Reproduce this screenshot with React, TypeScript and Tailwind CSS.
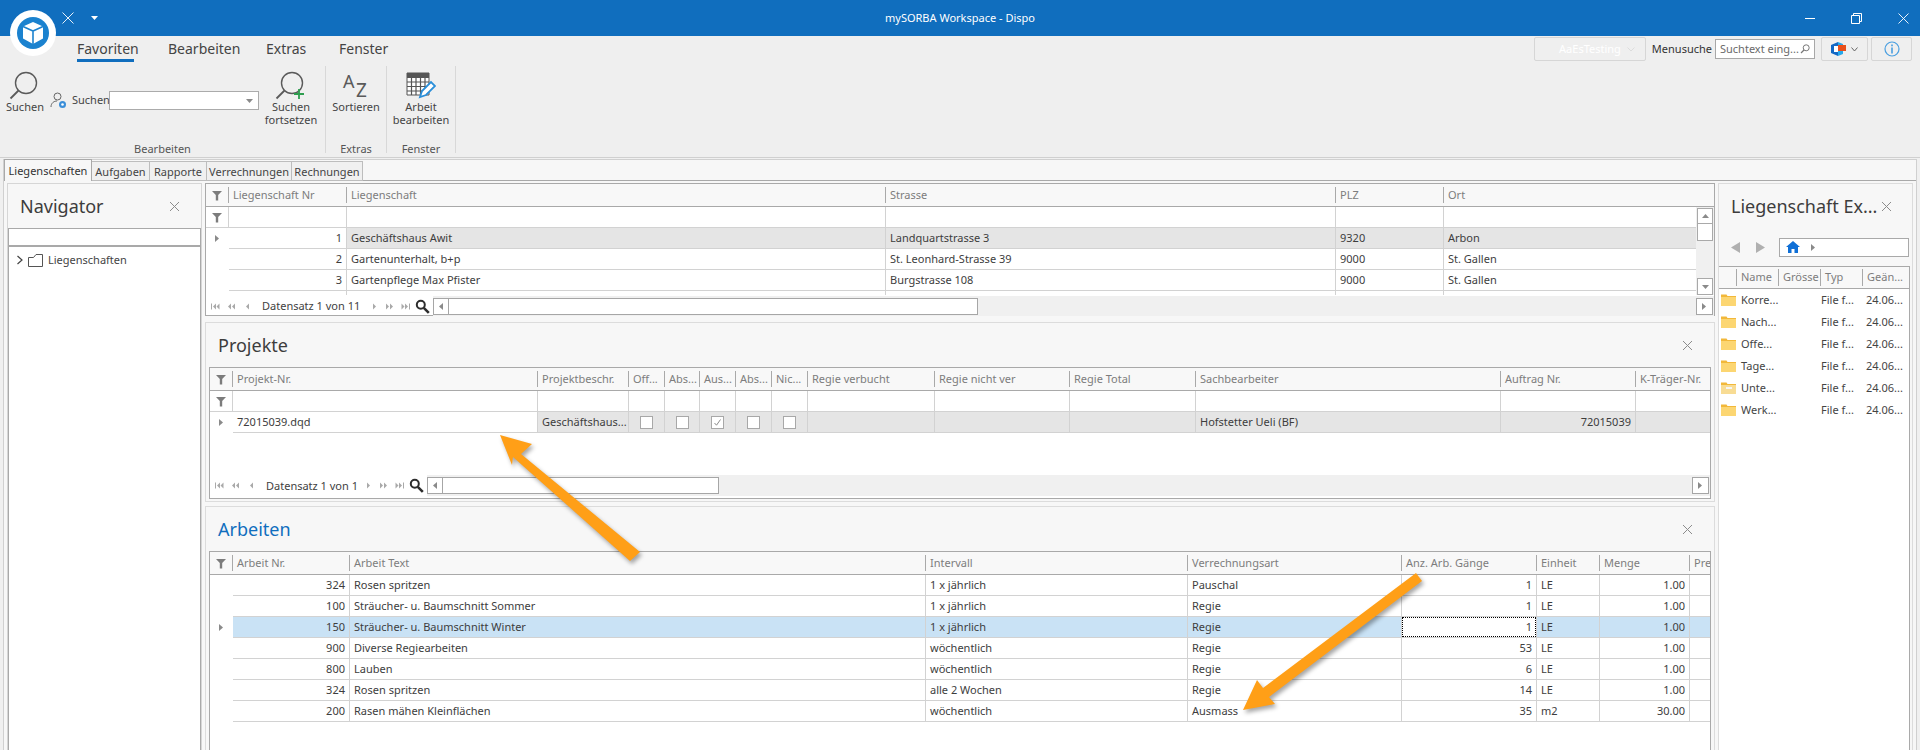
import React from "react";

const Tri = ({ dir = "r", c = "#8a8a8a" }: { dir?: "r" | "l" | "u" | "d"; c?: string }) => {
  const p = { r: "2,1 6,4.5 2,8", l: "6,1 2,4.5 6,8", u: "1,6 4.5,2 8,6", d: "1,3 4.5,7 8,3" }[dir];
  return (
    <svg width="9" height="9" viewBox="0 0 9 9" className="shrink-0">
      <polygon points={p} fill={c} />
    </svg>
  );
};

const Funnel = () => (
  <svg width="12" height="11" viewBox="0 0 12 11">
    <path d="M1 1h10L7.2 5v5.5H4.8V5z" fill="#7c7c7c" />
  </svg>
);

const Close = ({ c = "#8c8c8c" }: { c?: string }) => (
  <svg width="11" height="11" viewBox="0 0 11 11">
    <path d="M1 1l9 9M10 1l-9 9" stroke={c} strokeWidth="1" fill="none" />
  </svg>
);

const PagerGlyph = ({ kind }: { kind: string }) => {
  const c = "#a9a9a9";
  const paths: Record<string, string> = {
    first: "M1 1.5v6h1v-6zM6 1.5L3 4.5l3 3zM9.5 1.5l-3 3 3 3z",
    pp: "M5 1.5L2 4.5l3 3zM9 1.5l-3 3 3 3z",
    p: "M7 1.5L4 4.5l3 3z",
    n: "M4 1.5l3 3-3 3z",
    nn: "M1 1.5l3 3-3 3zM5 1.5l3 3-3 3z",
    last: "M0.5 1.5l3 3-3 3zM4 1.5l3 3-3 3zM8 1.5v6h1v-6z",
  };
  return (
    <span className="w-[16px] flex justify-center">
      <svg width="10" height="9" viewBox="0 0 10 9">
        <path d={paths[kind]} fill={c} />
      </svg>
    </span>
  );
};

const Pager = ({ text, textW, thumb }: { text: string; textW: string; thumb: string }) => (
  <div className="flex items-center h-full pl-[1px]">
    <PagerGlyph kind="first" />
    <PagerGlyph kind="pp" />
    <PagerGlyph kind="p" />
    <span className={`${textW} ml-[7px] text-[11px] leading-[20px] text-[#3f3f3f] whitespace-nowrap`}>{text}</span>
    <PagerGlyph kind="n" />
    <PagerGlyph kind="nn" />
    <PagerGlyph kind="last" />
    <svg width="15" height="15" viewBox="0 0 15 15" className="shrink-0 ml-[1px]">
      <circle cx="5.8" cy="5.8" r="4" fill="none" stroke="#2d2d2d" strokeWidth="2" />
      <path d="M8.8 8.8l5 5" stroke="#2d2d2d" strokeWidth="2.6" />
    </svg>
    <div className="flex-1 h-full ml-[3px] bg-[#f0f0f0] flex items-center justify-between pr-[1px]">
      <div className={`${thumb} h-[17px] border border-[#a6a6a6] bg-white flex`}>
        <span className="w-[15px] h-full border-r border-[#a6a6a6] flex items-center justify-center">
          <Tri dir="l" />
        </span>
      </div>
      <span className="w-[17px] h-[17px] border border-[#a6a6a6] bg-white flex items-center justify-center">
        <Tri dir="r" />
      </span>
    </div>
  </div>
);

const HeaderRow = ({ cols, labels }: { cols: string; labels: string[] }) => (
  <div className={`grid ${cols} h-[23px] border-b border-[#a9a9a9] bg-[#f8f8f8] shrink-0 overflow-hidden`}>
    <div className="flex items-center justify-center my-[3px] border-r border-[#a9a9a9]">
      <Funnel />
    </div>
    {labels.map((l, i) => (
      <div
        key={i}
        className="my-[3px] pl-[4px] border-r border-[#a9a9a9] last:border-r-0 text-[11px] leading-[16px] text-[#7d7d7d] whitespace-nowrap overflow-hidden"
      >
        {l}
      </div>
    ))}
  </div>
);

type Cell = { t?: string; right?: boolean; node?: React.ReactNode; bg?: string };

const Row = ({ cols, first, cells, rowBg }: { cols: string; first?: React.ReactNode; cells: Cell[]; rowBg?: string }) => (
  <div className={`grid ${cols} h-[21px] shrink-0`}>
    <div className="flex items-center justify-center bg-white">{first}</div>
    {cells.map((c, i) => (
      <div
        key={i}
        className={`border-b border-r border-[#d2d2d2] last:border-r-0 px-[4px] text-[11px] leading-[20px] text-[#3d3d3d] whitespace-nowrap overflow-hidden ${
          c.right ? "text-right" : "text-left"
        } ${c.bg ?? rowBg ?? "bg-white"}`}
      >
        {c.node ?? c.t}
      </div>
    ))}
  </div>
);

const FilterRow = ({ cols, n }: { cols: string; n: number }) => (
  <div className={`grid ${cols} h-[21px] shrink-0 border-b border-[#d2d2d2]`}>
    <div className="flex items-center justify-center border-r border-[#d2d2d2]">
      <Funnel />
    </div>
    {Array.from({ length: n }).map((_, i) => (
      <div key={i} className="border-r border-[#d2d2d2] last:border-r-0" />
    ))}
  </div>
);

const G1 = "grid-cols-[23px_118px_539px_450px_108px_1fr]";
const G2 = "grid-cols-[23px_305px_91px_36px_35px_36px_36px_36px_127px_135px_126px_305px_135px_1fr]";
const G3 = "grid-cols-[23px_117px_576px_262px_214px_135px_63px_90px_1fr]";

const gray = "bg-[#e5e5e5]";
const blue = "bg-[#c9e2f5]";

const Check = ({ on }: { on?: boolean }) => (
  <span className="flex items-center justify-center h-full">
    <span className="w-[13px] h-[13px] border border-[#a8a8a8] bg-white flex items-center justify-center">
      {on && (
        <svg width="9" height="9" viewBox="0 0 9 9">
          <path d="M1.5 5l2 2.2L7.5 1.5" fill="none" stroke="#8c8c8c" strokeWidth="1" />
        </svg>
      )}
    </span>
  </span>
);

const arbeiten: string[][] = [
  ["324", "Rosen spritzen", "1 x jährlich", "Pauschal", "1", "LE", "1.00"],
  ["100", "Sträucher- u. Baumschnitt Sommer", "1 x jährlich", "Regie", "1", "LE", "1.00"],
  ["150", "Sträucher- u. Baumschnitt Winter", "1 x jährlich", "Regie", "1", "LE", "1.00"],
  ["900", "Diverse Regiearbeiten", "wöchentlich", "Regie", "53", "LE", "1.00"],
  ["800", "Lauben", "wöchentlich", "Regie", "6", "LE", "1.00"],
  ["324", "Rosen spritzen", "alle 2 Wochen", "Regie", "14", "LE", "1.00"],
  ["200", "Rasen mähen Kleinflächen", "wöchentlich", "Ausmass", "35", "m2", "30.00"],
];

const Folder = ({ special }: { special?: boolean }) => (
  <svg width="15" height="12" viewBox="0 0 15 12" className="shrink-0">
    <path d="M0 0.5h5.5l1 1.5H15v10H0z" fill="#f2b83a" />
    <rect x="0" y="3" width="15" height="9" fill={special ? "#f8dc94" : "#fcd672"} />
    {special && <path d="M5 5h6v2H5z" fill="#f5f5f5" />}
  </svg>
);

const PanelTitle = ({ children, blueT }: { children: string; blueT?: boolean }) => (
  <div className="h-[44px] flex items-center justify-between pl-[12px] pr-[21px] shrink-0">
    <span className={`text-[18px] leading-[24px] whitespace-nowrap ${blueT ? "text-[#106ebe]" : "text-[#3d3d3d]"}`}>{children}</span>
    <Close />
  </div>
);

const BigBtn = ({ icon, lines, w }: { icon: React.ReactNode; lines: string[]; w: string }) => (
  <div className={`${w} flex flex-col items-center pt-[6px] shrink-0`}>
    <div className="h-[28px] flex items-center justify-center">{icon}</div>
    {lines.map((l) => (
      <span key={l} className="text-[11px] leading-[13px] text-[#444] whitespace-nowrap">
        {l}
      </span>
    ))}
  </div>
);

const Loupe = ({ plus }: { plus?: boolean }) => (
  <svg width="32" height="30" viewBox="0 0 32 30">
    <circle cx="17" cy="12" r="10.5" fill="none" stroke="#5a5a5a" strokeWidth="1.4" />
    <path d="M9.5 19.5L1.5 27.5" stroke="#5a5a5a" strokeWidth="1.8" />
    {plus && <path d="M24 18v10M19 23h10" stroke="#2e9e4f" strokeWidth="1.8" />}
  </svg>
);

const RibbonGroup = ({ w, label, children }: { w: string; label: string; children: React.ReactNode }) => (
  <div className={`${w} h-[87px] border-r border-[#d8d8d8] flex flex-col shrink-0`}>
    <div className="flex-1 flex">{children}</div>
    <div className="text-center text-[11px] leading-[8px] text-[#555]">{label}</div>
  </div>
);

export default function App() {
  return (
    <div className="relative w-[1920px] h-[750px] overflow-hidden bg-[#f0f0f0] flex flex-col font-['Noto_Sans',sans-serif]">
      {/* title bar */}
      <div className="h-[36px] bg-[#106ebe] flex items-center shrink-0 text-white">
        <span className="ml-[62px]">
          <svg width="12" height="12" viewBox="0 0 12 12">
            <path d="M0.5 0.5l11 11M11.5 0.5l-11 11" stroke="#fff" strokeWidth="0.9" />
          </svg>
        </span>
        <span className="ml-[17px]">
          <svg width="7" height="4" viewBox="0 0 7 4">
            <polygon points="0,0 7,0 3.5,4" fill="#fff" />
          </svg>
        </span>
        <span className="ml-[787px] w-[116px] text-[11px] leading-[14px] whitespace-nowrap">mySORBA Workspace - Dispo</span>
        <div className="ml-auto flex items-center pr-[11px] gap-[36px]">
          <span className="w-[10px] h-[1px] bg-white" />
          <svg width="11" height="11" viewBox="0 0 11 11">
            <path d="M0.5 2.5h8v8h-8zM2.5 2.5v-2h8v8h-2" fill="none" stroke="#fff" strokeWidth="1" />
          </svg>
          <svg width="11" height="11" viewBox="0 0 11 11">
            <path d="M0.5 0.5l10 10M10.5 0.5l-10 10" stroke="#fff" strokeWidth="0.9" />
          </svg>
        </div>
      </div>

      {/* ribbon */}
      <div className="h-[121px] shrink-0 bg-[#efefef] border-b border-[#d0d0d0] box-content">
        <div className="h-[26px] flex items-start">
          <div className="ml-[77px] flex gap-[34px] text-[14px] leading-[26px] text-[#444]">
            <span className="w-[57px] h-[26px] border-b-[3px] border-[#106ebe] whitespace-nowrap">Favoriten</span>
            <span className="w-[64px] whitespace-nowrap">Bearbeiten</span>
            <span className="w-[39px] whitespace-nowrap">Extras</span>
            <span className="w-[45px] whitespace-nowrap">Fenster</span>
          </div>
          <div className="ml-auto flex items-center mt-[1px] h-[24px] pr-[8px]">
            <div className="w-[112px] h-[24px] border border-[#d6d6d6] rounded-[2px] flex items-center justify-end pr-[10px] gap-[6px] text-[11px] text-white">
              <span>AaEsTesting</span>
              <svg width="8" height="5" viewBox="0 0 8 5">
                <path d="M0.5 0.5L4 4l3.5-3.5" stroke="#dcdcdc" fill="none" />
              </svg>
            </div>
            <span className="ml-[6px] text-[11px] text-[#333]">Menusuche</span>
            <div className="ml-[3px] w-[100px] h-[20px] border border-[#a8a8a8] bg-white flex items-center justify-between px-[4px] text-[11px] text-[#6a6a6a]">
              <span className="whitespace-nowrap">Suchtext eing...</span>
              <svg width="10" height="10" viewBox="0 0 10 10">
                <circle cx="6.2" cy="3.8" r="3" fill="none" stroke="#777" />
                <path d="M4 6L1 9" stroke="#777" strokeWidth="1.3" />
              </svg>
            </div>
            <div className="ml-[6px] w-[47px] h-[24px] border border-[#d6d6d6] rounded-[2px] flex items-center justify-center gap-[5px]">
              <svg width="15" height="14" viewBox="0 0 15 14">
                <path d="M0 3l7-3v14l-7-3z" fill="#1368c4" />
                <path d="M7 0l5 2v10l-5 2z" fill="#28a8ea" />
                <rect x="7" y="3" width="8" height="6" fill="#e8501c" />
                <rect x="3" y="4" width="4" height="6" fill="#fff" />
              </svg>
              <svg width="7" height="5" viewBox="0 0 7 5">
                <path d="M0.5 0.5L3.5 4l3-3.5" stroke="#666" fill="none" />
              </svg>
            </div>
            <div className="ml-[3px] w-[41px] h-[24px] border border-[#d6d6d6] rounded-[2px] flex items-center justify-center">
              <svg width="16" height="16" viewBox="0 0 16 16">
                <circle cx="8" cy="8" r="7" fill="none" stroke="#4a9fe0" strokeWidth="1.2" />
                <rect x="7.2" y="3.5" width="1.6" height="1.8" fill="#4a9fe0" />
                <rect x="7.2" y="6.5" width="1.6" height="6" fill="#4a9fe0" />
              </svg>
            </div>
          </div>
        </div>
        <div className="flex mt-[4px]">
          <RibbonGroup w="w-[326px]" label="Bearbeiten">
            <BigBtn w="w-[50px]" icon={<Loupe />} lines={["Suchen"]} />
            <div className="flex items-center h-[19px] mt-[25px] w-[209px] shrink-0">
              <svg width="17" height="17" viewBox="0 0 17 17" className="shrink-0">
                <circle cx="7.5" cy="4.5" r="3.5" fill="none" stroke="#666" />
                <path d="M1 15c0-4 3-6 6-6" fill="none" stroke="#666" />
                <circle cx="12.5" cy="12.5" r="3.5" fill="#3b8ed8" />
                <circle cx="12.5" cy="12.5" r="1.3" fill="#fff" />
              </svg>
              <span className="ml-[5px] w-[37px] text-[11px] text-[#444] whitespace-nowrap">Suchen</span>
              <div className="w-[150px] h-[19px] border border-[#ababab] bg-white flex items-center justify-end pr-[4px]">
                <Tri dir="d" c="#8a8a8a" />
              </div>
            </div>
            <BigBtn w="w-[64px]" icon={<Loupe plus />} lines={["Suchen", "fortsetzen"]} />
          </RibbonGroup>
          <RibbonGroup w="w-[61px]" label="Extras">
            <BigBtn
              w="w-full"
              icon={
                <svg width="28" height="26" viewBox="0 0 28 26">
                  <text x="1" y="15" fontSize="18" fill="#5a5a5a" fontFamily="Noto Sans, sans-serif">A</text>
                  <text x="14" y="24" fontSize="19" fill="#5a5a5a" fontFamily="Noto Sans, sans-serif">Z</text>
                </svg>
              }
              lines={["Sortieren"]}
            />
          </RibbonGroup>
          <RibbonGroup w="w-[69px]" label="Fenster">
            <BigBtn
              w="w-full"
              icon={
                <svg width="30" height="28" viewBox="0 0 30 28">
                  <path d="M1 1h22v22H1z" fill="#fff" stroke="#555" />
                  <path d="M1 5.5h22M1 10h22M1 14.5h22M1 19h22M5.5 1v22M10 1v22M14.5 1v22M19 1v22" stroke="#555" strokeWidth="1.2" />
                  <path d="M1 1h22v4H1z" fill="#555" />
                  <path d="M14 25l2-6 9-9 4 4-9 9z" fill="#fff" stroke="#2b8fd9" strokeWidth="1.8" />
                </svg>
              }
              lines={["Arbeit", "bearbeiten"]}
            />
          </RibbonGroup>
        </div>
      </div>

      {/* document tabs */}
      <div className="mt-[1px] mx-[3px] flex-1 min-h-0 bg-[#f7f7f7] border border-[#d0d0d0] flex flex-col">
        <div className="h-[21px] flex items-end shrink-0 border-b border-[#a9a9a9] relative">
          <div className="flex items-end -mb-[1px]">
            <span className="w-[88px] h-[22px] bg-[#f7f7f7] border border-b-0 border-[#a9a9a9] text-[11px] leading-[21px] text-center text-[#333]">Liegenschaften</span>
            {[
              ["w-[58px]", "Aufgaben"],
              ["w-[57px]", "Rapporte"],
              ["w-[85px]", "Verrechnungen"],
              ["w-[71px]", "Rechnungen"],
            ].map(([w, t]) => (
              <span key={t} className={`${w} h-[20px] bg-[#f0f0f0] border border-l-0 border-[#bdbdbd] text-[11px] leading-[19px] text-center text-[#444]`}>
                {t}
              </span>
            ))}
          </div>
        </div>

        <div className="flex gap-[3px] pl-[3px] pt-[2px] h-[580px] shrink-0 bg-[#f7f7f7]">
          {/* navigator */}
          <div className="w-[195px] shrink-0 border border-[#d6d6d6] flex flex-col">
            <PanelTitle>Navigator</PanelTitle>
            <div className="h-[19px] border border-[#a9a9a9] border-b-[2px] bg-white shrink-0" />
            <div className="flex-1 bg-white border-x border-[#a9a9a9] pt-[3px]">
              <div className="flex items-center h-[20px] pl-[7px] text-[11px] text-[#444]">
                <svg width="8" height="10" viewBox="0 0 8 10">
                  <path d="M1.5 1L6 5l-4.5 4" fill="none" stroke="#444" strokeWidth="1.2" />
                </svg>
                <svg width="15" height="13" viewBox="0 0 15 13" className="ml-[4px]">
                  <path d="M0.5 3.5l5-0 0-0 0 0L8 0.5h6.5v12H0.5z" fill="#fff" stroke="#555" />
                </svg>
                <span className="ml-[5px]">Liegenschaften</span>
              </div>
            </div>
          </div>

          {/* center */}
          <div className="w-[1510px] shrink-0 flex flex-col">
            {/* top grid */}
            <div className="h-[133px] shrink-0 border border-[#a9a9a9] bg-white flex flex-col">
              <HeaderRow cols={G1} labels={["Liegenschaft Nr", "Liegenschaft", "Strasse", "PLZ", "Ort"]} />
              <div className="h-[88px] flex overflow-hidden shrink-0">
                <div className="flex-1 flex flex-col overflow-hidden">
                  <FilterRow cols={G1} n={5} />
                  <Row
                    cols={G1}
                    first={<Tri dir="r" />}
                    rowBg={gray}
                    cells={[
                      { t: "1", right: true, bg: "bg-white" },
                      { t: "Geschäftshaus Awit" },
                      { t: "Landquartstrasse 3" },
                      { t: "9320" },
                      { t: "Arbon" },
                    ]}
                  />
                  <Row cols={G1} cells={[{ t: "2", right: true }, { t: "Gartenunterhalt, b+p" }, { t: "St. Leonhard-Strasse 39" }, { t: "9000" }, { t: "St. Gallen" }]} />
                  <Row cols={G1} cells={[{ t: "3", right: true }, { t: "Gartenpflege Max Pfister" }, { t: "Burgstrasse 108" }, { t: "9000" }, { t: "St. Gallen" }]} />
                  <Row cols={G1} cells={[{ t: "" }, { t: "" }, { t: "" }, { t: "" }, { t: "" }]} />
                </div>
                <div className="w-[18px] shrink-0 bg-[#f0f0f0] flex flex-col pl-[1px] pt-[1px] pr-[1px]">
                  <span className="h-[16px] border border-[#a9a9a9] bg-white flex items-center justify-center">
                    <Tri dir="u" />
                  </span>
                  <span className="h-[17px] border border-t-0 border-[#a9a9a9] bg-white" />
                  <span className="flex-1" />
                  <span className="h-[17px] border border-[#a9a9a9] bg-white flex items-center justify-center">
                    <Tri dir="d" />
                  </span>
                </div>
              </div>
              <div className="flex-1 pt-[1px] pb-[1px]">
                <Pager text="Datensatz 1 von 11" textW="w-[104px]" thumb="w-[545px]" />
              </div>
            </div>

            {/* Projekte */}
            <div className="mt-[6px] h-[180px] shrink-0 border border-[#dcdcdc] flex flex-col">
              <PanelTitle>Projekte</PanelTitle>
              <div className="mx-[3px] h-[132px] border border-[#a9a9a9] bg-white flex flex-col shrink-0">
                <HeaderRow
                  cols={G2}
                  labels={["Projekt-Nr.", "Projektbeschr.", "Off...", "Abs...", "Aus...", "Abs...", "Nic...", "Regie verbucht", "Regie nicht ver", "Regie Total", "Sachbearbeiter", "Auftrag Nr.", "K-Träger-Nr."]}
                />
                <FilterRow cols={G2} n={13} />
                <Row
                  cols={G2}
                  first={<Tri dir="r" />}
                  rowBg={gray}
                  cells={[
                    { t: "72015039.dqd", bg: "bg-white" },
                    { t: "Geschäftshaus..." },
                    { node: <Check /> },
                    { node: <Check /> },
                    { node: <Check on /> },
                    { node: <Check /> },
                    { node: <Check /> },
                    {},
                    {},
                    {},
                    { t: "Hofstetter Ueli (BF)" },
                    { t: "72015039", right: true },
                    {},
                  ]}
                />
                <div className="flex-1" />
                <div className="h-[21px] shrink-0 mb-[2px]">
                  <Pager text="Datensatz 1 von 1" textW="w-[94px]" thumb="w-[292px]" />
                </div>
              </div>
            </div>

            {/* Arbeiten */}
            <div className="mt-[4px] flex-1 border border-[#dcdcdc] flex flex-col">
              <PanelTitle blueT>Arbeiten</PanelTitle>
              <div className="mx-[3px] flex-1 border border-[#a9a9a9] bg-white flex flex-col overflow-hidden">
                <HeaderRow cols={G3} labels={["Arbeit Nr.", "Arbeit Text", "Intervall", "Verrechnungsart", "Anz. Arb. Gänge", "Einheit", "Menge", "Pre"]} />
                {arbeiten.map((r, i) => (
                  <Row
                    key={i}
                    cols={G3}
                    first={i === 2 ? <Tri dir="r" /> : undefined}
                    rowBg={i === 2 ? blue : undefined}
                    cells={[
                      { t: r[0], right: true },
                      { t: r[1] },
                      { t: r[2] },
                      { t: r[3] },
                      i === 2
                        ? {
                            bg: "bg-white",
                            node: (
                              <div className="-mx-[4px] h-[20px] pr-[3px] border border-dotted border-black text-right leading-[18px]">{r[4]}</div>
                            ),
                          }
                        : { t: r[4], right: true },
                      { t: r[5] },
                      { t: r[6], right: true },
                      {},
                    ]}
                  />
                ))}
              </div>
            </div>
          </div>

          {/* explorer */}
          <div className="w-[195px] shrink-0 border border-[#dcdcdc] flex flex-col">
            <div className="h-[44px] flex items-center justify-between pl-[12px] pr-[20px] shrink-0">
              <span className="text-[18px] leading-[24px] text-[#3d3d3d] whitespace-nowrap">Liegenschaft Ex...</span>
              <Close />
            </div>
            <div className="h-[38px] flex items-center pl-[11px] shrink-0">
              <svg width="11" height="13" viewBox="0 0 11 13">
                <polygon points="10,1 1,6.5 10,12" fill="#b0b0b0" />
              </svg>
              <svg width="11" height="13" viewBox="0 0 11 13" className="ml-[14px]">
                <polygon points="1,1 10,6.5 1,12" fill="#b0b0b0" />
              </svg>
              <div className="ml-[13px] w-[130px] h-[19px] border border-[#a9a9a9] bg-white flex items-center pl-[6px] gap-[9px]">
                <svg width="14" height="12" viewBox="0 0 14 12">
                  <path d="M7 0L0 6h2v6h3.5V8h3v4H12V6h2z" fill="#0f6fd6" />
                </svg>
                <Tri dir="r" />
              </div>
            </div>
            <div className="w-[191px] flex-1 bg-white border-r border-t border-[#a9a9a9] flex flex-col">
              <div className="grid grid-cols-[18px_42px_42px_42px_1fr] h-[22px] border-b border-[#a9a9a9] bg-[#f8f8f8] shrink-0">
                <div className="my-[2px] border-r border-[#a9a9a9]" />
                {["Name", "Grösse", "Typ", "Geän..."].map((h) => (
                  <div key={h} className="my-[2px] pl-[4px] border-r border-[#a9a9a9] last:border-r-0 text-[11px] leading-[16px] text-[#7d7d7d] whitespace-nowrap overflow-hidden">
                    {h}
                  </div>
                ))}
              </div>
              {["Korre...", "Nach...", "Offe...", "Tage...", "Unte...", "Werk..."].map((n, i) => (
                <div key={n} className="grid grid-cols-[18px_84px_44px_1fr] h-[22px] items-center text-[11px] text-[#444] whitespace-nowrap">
                  <span className="pl-[2px]">
                    <Folder special={i === 4} />
                  </span>
                  <span className="pl-[4px]">{n}</span>
                  <span>File f...</span>
                  <span className="pl-[1px]">24.06...</span>
                </div>
              ))}
            </div>
          </div>
        </div>
      </div>

      {/* logo */}
      <div className="absolute left-[10px] top-[10px] w-[46px] h-[46px] rounded-full bg-white flex items-center justify-center">
        <svg width="32" height="32" viewBox="0 0 32 32">
          <circle cx="16" cy="16" r="16" fill="#1b82cf" />
          <path d="M16 5l10 4.5v12L16 27 6 21.500v-12z" fill="#fff" />
          <path d="M16 6.500l8.500 3.500L16 13.500 7.500 10z" fill="#fff" />
          <path d="M6 9.500L16 14v13M26 9.500L16 14" fill="none" stroke="#1b82cf" strokeWidth="1.6" />
        </svg>
      </div>

      {/* annotation arrows */}
      <svg className="absolute left-0 top-0 w-[1920px] h-[750px] pointer-events-none drop-shadow-[2px_3px_2px_rgba(0,0,0,0.35)]" viewBox="0 0 1920 750">
        <polygon points="500,435 532,444 521,454 640,552 630,561 513,457 512,465" fill="#ff9f17" />
        <polygon points="1243,710 1257,680 1263,688 1416,573 1422,581 1269,697 1275,704" fill="#ff9f17" />
      </svg>
    </div>
  );
}
